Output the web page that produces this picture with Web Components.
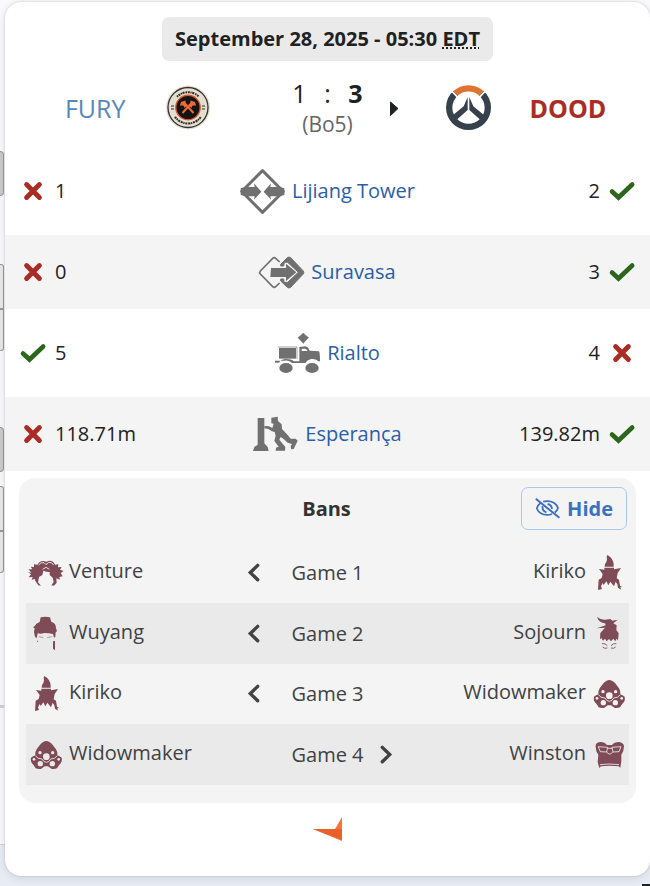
<!DOCTYPE html>
<html lang="en">
<head>
<meta charset="utf-8">
<meta name="viewport" content="width=device-width, initial-scale=1">
<title>FURY vs DOOD</title>
<style>
  html {
    min-height: 100%;
    background: #fafafc;
  }
  body {
    margin: 0;
    min-height: 100vh;
    display: grid;
    overflow: hidden;
    font: 20px/30px "Open Sans", "Noto Sans", sans-serif;
    color: #202122;
    --red: #a92d25;
    --green: #2c661a;
    --stripe: #f4f4f4;
    --stripe-dark: #eaeaea;
  }
  page-backdrop, match-card {
    grid-area: 1 / 1;
  }
</style>
</head>
<body>
<page-backdrop></page-backdrop>

<match-card>
  <match-date slot="date">September 28, 2025 - 05:30 <abbr title="Eastern Daylight Time (UTC-4)">EDT</abbr></match-date>

  <match-header slot="header" score-left="1" score-right="3" best-of="5">
    <a slot="left" href="#fury">FURY</a>
    <svg-icon slot="left-logo" name="fury" size="45"></svg-icon>
    <svg-icon slot="right-logo" name="overwatch" size="45"></svg-icon>
    <a slot="right" href="#dood">DOOD</a>
  </match-header>

  <map-row left="1" right="2" winner="right" mode="control"><a href="#lijiang">Lijiang Tower</a></map-row>
  <map-row left="0" right="3" winner="right" mode="flashpoint" striped><a href="#suravasa">Suravasa</a></map-row>
  <map-row left="5" right="4" winner="left" mode="escort"><a href="#rialto">Rialto</a></map-row>
  <map-row left="118.71m" right="139.82m" winner="right" mode="push" striped><a href="#esperanca">Esperança</a></map-row>

  <bans-panel slot="bans">
    <ban-row left="Venture" right="Kiriko" first="left">Game 1</ban-row>
    <ban-row left="Wuyang" right="Sojourn" first="left" striped>Game 2</ban-row>
    <ban-row left="Kiriko" right="Widowmaker" first="left">Game 3</ban-row>
    <ban-row left="Widowmaker" right="Winston" first="right" striped>Game 4</ban-row>
  </bans-panel>

  <a slot="footer" href="#faceit" aria-label="Match page"><svg-icon name="faceit" size="30"></svg-icon></a>
</match-card>

<script>
  const kiriko = `<path d="M49 0 Q67 10 68 29 L68 35 L41 35 L42 27 Q50 18 47 5 Z"/>
    <path d="M40 38 L69 38 L69 43 L90 39 L80 54 L77 70 L84 74 L87 92 L93 96 L88 97 L90 104 L81 98 L79 88 L74 80 L69 94 L58 80 L52 91 L46 79 L38 90 L35 84 L30 94 L33 102 L21 105 L23 74 L32 69 L35 57 L24 42 L40 44 Z"/>`;

  const widow = `<path d="M55 12 C66 12 75 24 84 37 Q89 45 88 55 Q95 57 101 62 Q104 75 94 83 L87 94 Q78 97 70 95 L60 88 L50 88 L40 95 Q32 97 23 94 L16 83 Q6 75 9 62 Q15 57 22 55 Q21 45 26 37 C35 24 44 12 55 12 Z"/>
    <g fill="var(--icon-back, #f4f4f4)"><circle cx="55" cy="59" r="10"/><circle cx="36" cy="47" r="5"/><circle cx="74" cy="47" r="5"/><circle cx="37" cy="80" r="8"/><circle cx="73" cy="80" r="8"/><circle cx="18" cy="67" r="4"/><circle cx="92" cy="67" r="4"/></g>
    <path d="M22 56 Q28 66 42 66 Q47 76 55 76 Q63 76 68 66 Q82 66 88 56" fill="none" stroke="var(--icon-back, #f4f4f4)" stroke-width="2.6"/>`;

  // Each entry: [viewBox, markup]
  const ICONS = {
    check: ["0 0 26 26", `<path d="M3 13.5 L9.5 19.5 L23.2 6.5" fill="none" stroke="currentColor" stroke-width="4.6" stroke-linecap="round" stroke-linejoin="miter"/>`],
    cross: ["0 0 26 26", `<path d="M6.6 6.6 L19.4 19.4 M19.4 6.6 L6.6 19.4" fill="none" stroke="currentColor" stroke-width="4.9" stroke-linecap="round"/>`],
    chevron: ["0 0 20 20", `<path d="M13.7 2.4 L6.3 9.6 L13.7 16.8" fill="none" stroke="currentColor" stroke-width="3.4" stroke-linecap="round"/>`],
    chevronRight: ["0 0 20 20", `<path d="M6.3 2.4 L13.7 9.6 L6.3 16.8" fill="none" stroke="currentColor" stroke-width="3.4" stroke-linecap="round"/>`],
    caret: ["0 0 16 16", `<path d="M8.5 1 L16 7.5 L8.5 14.5 Z" fill="currentColor" stroke="currentColor" stroke-linejoin="round"/>`],
    eyeOff: ["0 0 25 25", `<g fill="none" stroke="currentColor" stroke-width="1.8">
      <path d="M5.8 6.7 Q2.8 8.8 1.8 12.5 Q4.5 18.8 12.2 18.9 Q14.6 18.9 17 18"/>
      <path d="M8.2 5.7 Q10.5 5 13 5.1 Q20.6 5.5 23 12 Q22.2 14.7 19.8 16.5"/>
      <path d="M7.7 10 Q6.7 14.8 11.4 16.3 M12.6 8 Q16.8 8.9 17 13"/>
      <path d="M0.8 2.8 L24.4 21.8" stroke-width="2"/></g>`],
    faceit: ["0 0 30 24", `<path d="M0 12 L22 12 L29 0 V24 Z" fill="#f27635"/><path d="M0 12 L29 12 V18 L29 23 Z" fill="#e96028"/>`],

    fury: ["0 0 45 45", `<circle cx="23" cy="22.5" r="22" fill="#e5dfd2"/>
      <circle cx="23" cy="22.5" r="20" fill="none" stroke="#34312e" stroke-width="1.3"/>
      <circle cx="23" cy="22.5" r="12.2" fill="#151414" stroke="#d9582a" stroke-width="1.4"/>
      <path d="M12 11.800 A15.500 15.500 0 0 1 34 11.800" fill="none" stroke="#302d2a" stroke-width="2" stroke-dasharray="1.5 .7 2 .6 1.2 .6 2.2 .9"/>
      <path d="M10 31.800 A16 16 0 0 0 36 31.800" fill="none" stroke="#302d2a" stroke-width="2" stroke-dasharray="2.2 .6 1.3 .7 2 .8"/>
      <path d="M6 20h3v2h-3z M6 23h3v2h-3z M37 20h3v2h-3z M37 23h3v2h-3z" fill="#8b867d"/>
      <path d="M19 17.5 L28.5 28 M27 17.5 L17.5 28" stroke="#ed6d36" stroke-width="2"/>
      <path d="M15 20.5 L16 17 L20.5 15.5 L20.5 18.5 L22.5 20 L19.8 23 L18.3 20.6 Z M31 20.5 L30 17 L25.5 15.5 L25.5 18.5 L23.5 20 L26.2 23 L27.7 20.6 Z" fill="#ed6d36"/>`],
    overwatch: ["0 0 135 135", `<path d="M30 24 A58 58 0 0 0 9.5 67.5 A58 58 0 0 0 125.500 67.5 A58 58 0 0 0 105 24" fill="none" stroke="#37414c" stroke-width="19"/>
      <path d="M28 25.500 A58 58 0 0 1 107 25.500" fill="none" stroke="#df7333" stroke-width="19"/>
      <path d="M17 18 L35 37 M118 18 L100 37" stroke="#fff" stroke-width="5"/>
      <path d="M65 36 L65 75 L28 108 L15 95 L53 64 Z M70 36 L70 75 L107 108 L120 95 L82 64 Z" fill="#37414c"/>`],

    control: ["0 0 135 135", `<path d="M67.500 5 L130 67.500 L67.500 130 L5 67.500 Z" fill="none" stroke="currentColor" stroke-width="9" stroke-linejoin="round"/>
      <path d="M2 58 L16 54 H44 L42 43 L64 68 L42 92 L44 82 H16 L2 78 Z M133 58 L119 54 H91 L93 43 L71 68 L93 92 L91 82 H119 L133 78 Z" fill="currentColor"/>`],
    flashpoint: ["0 0 135 135", `<path d="M62 36 L50 25 Q46 21 41 25 L4 63 Q0 67.500 4 72 L41 110 Q46 114 50 110 L62 99" fill="none" stroke="currentColor" stroke-width="5"/>
      <path d="M65 43 L85 23 Q90 19 95 23 L132 62 Q137 67.500 132 73 L95 112 Q90 116 85 112 L65 93 V87 H74 L75 97 L86 97 L118 67 L86 37 L76 37 L74 48 H65 Z" fill="currentColor" stroke="currentColor" stroke-width="3"/>
      <path d="M36 54 H81 V41 L112 67 L81 93 V81 H34 Z" fill="currentColor"/>`],
    escort: ["0 0 135 135", `<g fill="currentColor"><path d="M85 6 L91 13 L101 20 L91 29 L85 37 L78 29 L69 20 L78 13 Z" stroke="currentColor" stroke-width="2"/>
      <rect x="12" y="51" width="51" height="32"/><path d="M9 48H66V84" fill="none" stroke="currentColor" stroke-width="2"/>
      <path d="M73 91 V48 L91 46 Q99 47 104 59 L132 61 Q135 65 135 91 L130 91 Q121 82 108 84 Q96 87 91 96 H51 Q43 86 28 89 H0 V95 H12 Q18 84 33 84 Q49 84 57 91 Z"/>
      <ellipse cx="33" cy="111" rx="20" ry="15"/><ellipse cx="111" cy="111" rx="20" ry="15"/></g>
      <path d="M80 53 H90 Q95 54 98 60 H80 Z" fill="#fff"/>`],
    push: ["0 0 135 135", `<g fill="currentColor"><path d="M14 18 H34 V94 L44 105 L47 117 H0 L4 105 L14 98 Z"/>
      <path d="M55 17 L74 14 L75 27 L86 37 L87 51 L104 69 L113 80 L128 80 L134 86 L122 111 L115 112 L113 103 L117 96 L104 92 L92 81 L83 75 L79 83 L97 105 L96 116 H68 L69 107 L77 104 L64 87 L68 71 L65 60 L57 58 L46 51 L34 49 L34 42 L48 43 L58 48 L62 35 L55 34 Z"/></g>`],

    Venture: ["0 0 108 108", `<path d="M0 52 L10 53 L2 43 L13 43 L8 35 L18 36 L18 28 L29 29 Q34 17 47 18 L55 20 L63 17 Q76 16 81 29 L91 28 L90 37 L101 36 L96 44 L107 48 L98 54 L104 64 L94 66 L96 74 L85 70 L86 83 L78 92 L70 91 L77 81 L74 68 L65 60 L65 51 L55 50 L46 47 L43 60 L33 66 L30 82 L39 92 L31 91 L22 78 L21 72 L11 74 L14 66 L2 67 L9 58 Z" fill="currentColor"/>
      <path d="M32 30 Q37 21 48 23 L54 29 L62 22 Q73 21 77 30 M44 43 L54 37 L64 43" fill="none" stroke="#f4f4f4" stroke-width="2.6"/>`],
    Wuyang: ["0 0 108 108", `<path d="M38 4 Q52 0 66 4 L70 18 Q84 21 84 37 L87 46 L83 49 L82 62 L78 65 L75 54 L62 52 L50 51 L38 53 L29 52 L26 67 L21 62 L18 48 L20 37 L15 34 L20 30 Q23 22 35 18 Z M75 76 L81 75 L81 103 L75 98 Z M27 74 h3 v3 h-3 Z" fill="currentColor"/>
      <path d="M33 62 L46 65 M57 65 L71 62" stroke="currentColor" stroke-width="3" opacity=".5"/>`],
    Kiriko: ["0 0 108 108", `<g fill="currentColor">${kiriko}</g>`],
    Widowmaker: ["0 0 108 108", `<g fill="currentColor">${widow}</g>`],
    Sojourn: ["0 0 108 108", `<path d="M18 3 Q30 12 42 11 L58 9 L64 14 L80 11 L67 22 L77 28 L76 42 L83 52 L81 73 L76 68 L73 76 L67 68 L60 76 L54 69 L47 76 L42 68 L36 74 L31 66 L27 70 L28 51 L42 35 L18 37 L44 28 L42 22 Q24 21 18 3 Z" fill="currentColor"/>
      <path d="M33 83 Q43 81 49 89 M76 83 Q67 81 60 89 M35 93 Q40 99 49 96 M74 93 Q69 99 60 96" fill="none" stroke="currentColor" stroke-width="2.6"/>`],
    Winston: ["0 0 108 108", `<path d="M14 25 Q15 16 29 15 Q41 15 48 24 H63 Q70 15 82 15 Q97 16 99 27 Q99 42 91 53 L91 73 L88 92 L83 88 Q56 84 30 88 L25 93 L20 75 L22 54 Q13 41 14 25 Z" fill="currentColor"/>
      <path d="M22 29 L50 31 L47 45 L28 44 Z M90 29 L63 31 L66 45 L84 44 Z M50 34 H63 M47 46 L54 51 L58 51 L65 46 M27 83 Q56 79 84 83" fill="none" stroke="#eaeaea" stroke-width="2.600"/>`]
  };

  const attach = (el, html) => {
    el.attachShadow({ mode: "open" }).innerHTML = html;
  };

  class SvgIcon extends HTMLElement {
    connectedCallback() {
      const [box, body] = ICONS[this.getAttribute("name")];
      const size = this.getAttribute("size") || 36;
      attach(this, `
        <style>
          :host { display: block; flex: none; }
          svg { display: block; overflow: visible; }
        </style>
        <svg width="${size}" height="${size}" viewBox="${box}" aria-hidden="true">${body}</svg>
      `);
    }
  }

  // Bracket page visible behind the popup
  class PageBackdrop extends HTMLElement {
    connectedCallback() {
      attach(this, `
        <style>
          :host { display: flex; flex-direction: column; background: #fafafc; overflow: hidden; }
          .bracket { flex: 1; width: 4px; box-sizing: border-box; padding-top: 151px; }
          .title, .match { box-sizing: border-box; border: 1px solid #999; border-left: 0; }
          .title { height: 45px; background: #cbcbcb; border-radius: 0 4px 4px 0; }
          .match { height: 87px; margin: 68px 0 76px; background: #e9e9e9; border-radius: 0 3px 3px 0; display: grid; grid-template-rows: 1fr 1fr; }
          .match i + i { border-top: 2px solid #999; }
          .title + .match + .title + .match { margin-top: 14px; margin-bottom: 132px; }
          .rule { height: 3px; background: #d2d2d4; }
          .foot { height: 41px; border-top: 1px solid #c9d0dc; background: #e8ecf4; display: flex; align-items: flex-end; justify-content: flex-end; }
          .foot i { width: 8px; height: 2px; background: #222; }
        </style>
        <div class="bracket">
          <div class="title"></div>
          <div class="match"><i></i><i></i></div>
          <div class="title"></div>
          <div class="match"><i></i><i></i></div>
          <div class="rule"></div>
        </div>
        <div class="foot"><i></i></div>
      `);
    }
  }

  class MatchCard extends HTMLElement {
    connectedCallback() {
      attach(this, `
        <style>
          :host {
            display: block;
            align-self: start;
            position: relative;
            margin: 2px 0 10px 5px;
            padding: 15px 0 32px;
            background: #fff;
            border-radius: 16px;
            box-shadow: 0 0 2px rgba(0,0,0,0.2), 0 2px 10px rgba(30,40,70,0.12);
          }
          .maps { display: flex; flex-direction: column; gap: 7px; }
          .bans { margin: 7px 14px 0; }
          .footer { display: flex; justify-content: center; margin-top: 11px; }
        </style>
        <slot name="date"></slot>
        <slot name="header"></slot>
        <div class="maps"><slot></slot></div>
        <div class="bans"><slot name="bans"></slot></div>
        <div class="footer"><slot name="footer"></slot></div>
      `);
    }
  }

  class MatchDate extends HTMLElement {
    connectedCallback() {
      attach(this, `
        <style>
          :host { display: block; text-align: center; }
          span { display: inline-block; vertical-align: top; padding: 7px 13px; background: #eaeaea; border-radius: 7px; font-weight: 700; }
        </style>
        <span><slot></slot></span>
      `);
    }
  }

  class MatchHeader extends HTMLElement {
    connectedCallback() {
      const left = this.getAttribute("score-left");
      const right = this.getAttribute("score-right");
      attach(this, `
        <style>
          :host { display: grid; grid-template-columns: 1fr 236px 1fr; align-items: center; height: 93px; font-size: 25px; }
          .team { display: flex; align-items: center; gap: 39px; }
          .left { justify-content: flex-end; }
          ::slotted(a) { text-decoration: none; color: #5788bd; }
          ::slotted(a[slot="right"]) { color: var(--red); font-weight: 700; }
          .score {
            display: grid;
            grid-template-columns: 18px 15px 7px 15px 18px;
            gap: 1px 17px;
            padding-top: 2px;
            justify-content: center;
            align-items: center;
            text-align: center;
          }
          .first { grid-column: 2; }
          .caret { grid-area: 1 / 5 / 3 / 6; justify-self: end; }
          .bo { grid-area: 2 / 2 / 3 / 5; font-size: 21px; color: #666; }
        </style>
        <div class="team left"><slot name="left"></slot><slot name="left-logo"></slot></div>
        <div class="score">
          <span class="first">${left}</span><span>:</span><b>${right}</b>
          <svg-icon class="caret" name="caret" size="16"></svg-icon>
          <span class="bo">(Bo${this.getAttribute("best-of")})</span>
        </div>
        <div class="team"><slot name="right-logo"></slot><slot name="right"></slot></div>
      `);
    }
  }

  class MapRow extends HTMLElement {
    connectedCallback() {
      const mark = side => this.getAttribute("winner") === side ? "check" : "cross";
      attach(this, `
        <style>
          :host { display: grid; grid-template-columns: 1fr auto 1fr; align-items: center; height: 74px; padding: 0 15px; }
          :host([striped]) { background: var(--stripe); }
          .side { display: flex; align-items: center; gap: 9px; }
          .right { flex-direction: row-reverse; }
          .map { display: flex; align-items: center; gap: 7px; }
          .check { color: var(--green); }
          .cross { color: var(--red); }
          .mode { color: #707070; }
          ::slotted(a) { color: #2a5ea8; text-decoration: none; }
        </style>
        <div class="side"><svg-icon class="${mark("left")}" name="${mark("left")}" size="26"></svg-icon>${this.getAttribute("left")}</div>
        <div class="map"><svg-icon class="mode" name="${this.getAttribute("mode")}" size="45"></svg-icon><slot></slot></div>
        <div class="side right"><svg-icon class="${mark("right")}" name="${mark("right")}" size="26"></svg-icon>${this.getAttribute("right")}</div>
      `);
    }
  }

  class BansPanel extends HTMLElement {
    connectedCallback() {
      attach(this, `
        <style>
          :host { display: block; padding: 9px 7px 18px; background: var(--stripe); border-radius: 16px; color: #404244; }
          header { display: grid; grid-template-columns: 1fr auto 1fr; align-items: center; height: 43px; margin-bottom: 13px; padding-right: 2px; }
          h3 { grid-column: 2; margin: 0; font-size: 20px; color: #333; }
          button {
            justify-self: end;
            display: flex;
            align-items: center;
            gap: 7px;
            height: 43px;
            padding: 0 13px;
            border: 1px solid #a9c8ee;
            border-radius: 7px;
            background: transparent;
            color: #3a72c0;
            font: inherit;
            font-weight: 700;
            cursor: pointer;
          }
          :host([collapsed]) .rows { display: none; }
        </style>
        <header>
          <h3>Bans</h3>
          <button type="button"><svg-icon name="eyeOff" size="25"></svg-icon><span>Hide</span></button>
        </header>
        <div class="rows"><slot></slot></div>
      `);
      const button = this.shadowRoot.querySelector("button");
      button.addEventListener("click", () => {
        const collapsed = this.toggleAttribute("collapsed");
        button.querySelector("span").textContent = collapsed ? "Show" : "Hide";
      });
    }
  }

  class BanRow extends HTMLElement {
    connectedCallback() {
      const left = this.getAttribute("left");
      const right = this.getAttribute("right");
      const first = this.getAttribute("first");
      attach(this, `
        <style>
          :host { display: grid; grid-template-columns: 1fr auto 1fr; align-items: center; height: 60px; padding: 0 2px; }
          :host([striped]) { height: 61px; background: var(--stripe-dark); --icon-back: #eaeaea; }
          .side { display: flex; align-items: center; gap: 5px; }
          .right { flex-direction: row-reverse; }
          .name { padding-bottom: 4px; }
          .hero { color: #7e4b57; }
          .game { display: grid; grid-template-columns: 20px auto 20px; align-items: center; gap: 27px; }
          .label { grid-column: 2; }
          .game .right-pick { grid-column: 3; margin-left: -15px; }
        </style>
        <div class="side"><svg-icon class="hero" name="${left}"></svg-icon><span class="name">${left}</span></div>
        <div class="game">
          ${first === "left" ? `<svg-icon name="chevron" size="20"></svg-icon>` : ""}
          <span class="label"><slot></slot></span>
          ${first === "right" ? `<svg-icon class="right-pick" name="chevronRight" size="20"></svg-icon>` : ""}
        </div>
        <div class="side right"><svg-icon class="hero" name="${right}"></svg-icon><span class="name">${right}</span></div>
      `);
    }
  }

  customElements.define("svg-icon", SvgIcon);
  customElements.define("page-backdrop", PageBackdrop);
  customElements.define("match-card", MatchCard);
  customElements.define("match-date", MatchDate);
  customElements.define("match-header", MatchHeader);
  customElements.define("map-row", MapRow);
  customElements.define("bans-panel", BansPanel);
  customElements.define("ban-row", BanRow);
</script>
</body>
</html>
